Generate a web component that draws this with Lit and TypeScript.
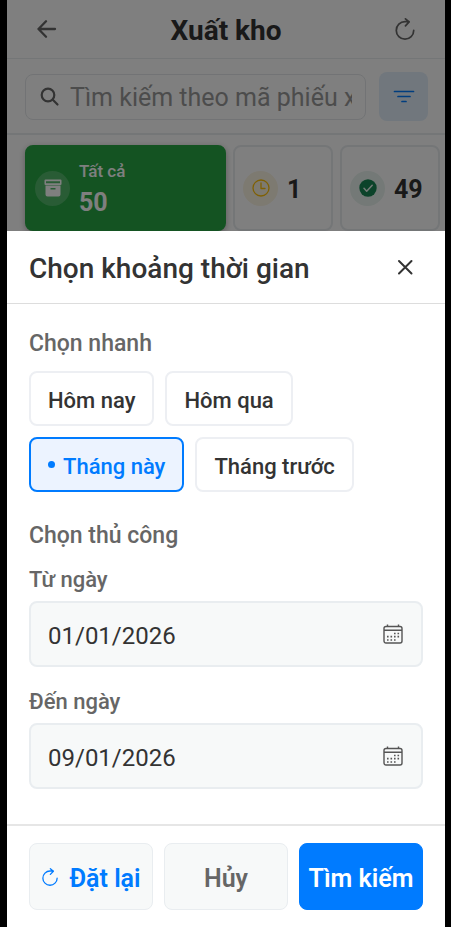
import { LitElement, html, css, svg, nothing } from "lit";
import { customElement, state } from "lit/decorators.js";
import { classMap } from "lit/directives/class-map.js";

const backIcon = svg`<svg width="20" height="20" viewBox="0 0 20 20" fill="none" stroke="currentColor" stroke-width="2.300" stroke-linecap="round" stroke-linejoin="round" aria-hidden="true"><path d="M18 10H1.500M9 2.300 1.500 10 9 17.700"/></svg>`;

const reloadIcon = (size: number, weight: number) => svg`<svg width=${size} height=${size} viewBox="0 0 24 24" fill="none" stroke="currentColor" stroke-width=${weight} stroke-linecap="round" stroke-linejoin="round" aria-hidden="true"><path d="M21.500 13.500A9.500 9.500 0 1 1 12 4h4.500M12.500 1 16.500 4.300 12.500 8.500"/></svg>`;

const searchIcon = svg`<svg width="20" height="20" viewBox="0 0 20 20" fill="none" stroke="currentColor" stroke-width="2.200" stroke-linecap="round" aria-hidden="true"><circle cx="8" cy="8" r="6.300"/><path d="m12.800 12.800 4.700 4.700"/></svg>`;

const filterIcon = svg`<svg width="22" height="14" viewBox="0 0 22 14" fill="none" stroke="currentColor" stroke-width="1.700" stroke-linecap="round" aria-hidden="true"><path d="M1.500 1.500h19M5 6.500h12M9 11.500h4"/></svg>`;

const archiveIcon = svg`<svg width="18" height="18" viewBox="0 0 18 18" fill="currentColor" aria-hidden="true"><path fill-rule="evenodd" d="M1.500.500h15a1 1 0 0 1 1 1V5a1 1 0 0 1-1 1h-15a1 1 0 0 1-1-1V1.500a1 1 0 0 1 1-1ZM2 2.200v2h14v-2ZM1.500 6.500h15v9a2 2 0 0 1-2 2h-11a2 2 0 0 1-2-2ZM6.500 9v1.400h5V9Z"/></svg>`;

const clockIcon = svg`<svg width="18" height="18" viewBox="0 0 18 18" fill="none" stroke="currentColor" stroke-width="1.300" stroke-linecap="round" stroke-linejoin="round" aria-hidden="true"><circle cx="9" cy="9" r="8"/><path d="M9 4v5.500h4"/></svg>`;

const checkIcon = svg`<svg width="18" height="18" viewBox="0 0 18 18" aria-hidden="true"><circle cx="9" cy="9" r="8.700" fill="currentColor"/><path d="m5 9.300 2.700 2.900 5.500-6" fill="none" stroke="#e8f5ee" stroke-width="1.500" stroke-linecap="round" stroke-linejoin="round"/></svg>`;

const closeIcon = svg`<svg width="16" height="16" viewBox="0 0 16 16" fill="none" stroke="currentColor" stroke-width="2" stroke-linecap="round" aria-hidden="true"><path d="m2 2 12.500 12.500M14.500 2 2 14.500"/></svg>`;

const calendarIcon = svg`<svg width="20" height="20" viewBox="0 0 20 20" fill="none" stroke="currentColor" aria-hidden="true"><rect x="1" y="2.500" width="18" height="16.500" rx="2" stroke-width="1.400"/><path d="M1 6.300h18M4.500.500v2M15.500.500v2" stroke-width="1.400"/><path d="M11 9.500h1.600M14.500 9.500h1.600M4 12.700h1.600M7.500 12.700h1.600M11 12.700h1.600M14.500 12.700h1.600M4 16h1.600M7.500 16h1.600M11 16h1.600" stroke-width="1.700"/></svg>`;

const QUICK_RANGES = ["Hôm nay", "Hôm qua", "Tháng này", "Tháng trước"];

@customElement("stock-screen")
class StockScreen extends LitElement {
  static styles = css`
    :host {
      display: block;
      min-width: 0;
      overflow: hidden;
      background: #fff;
      color: #333;
    }
    * {
      box-sizing: border-box;
    }
    button,
    input {
      font: inherit;
      color: inherit;
      padding: 0;
      border: 0;
      background: none;
    }
    svg {
      display: block;
      flex: none;
    }
    .bar {
      display: flex;
      align-items: center;
      justify-content: space-between;
      height: 59px;
      padding: 0 20px;
      border-bottom: 1px solid #e9ecef;
    }
    .bar h1 {
      margin: 0;
      padding-top: 3px;
      font-size: 28px;
      line-height: 32px;
      font-weight: 700;
    }
    .icon-button {
      display: grid;
      place-items: center;
      width: 40px;
      height: 40px;
      color: #666;
    }
    .search-row {
      display: flex;
      align-items: center;
      gap: 13px;
      padding: 13px 17px 12px 18px;
      border-bottom: 2px solid #e9ecef;
    }
    .search {
      flex: 1;
      min-width: 0;
      display: flex;
      align-items: center;
      gap: 10px;
      height: 46px;
      padding: 0 13px 0 14px;
      border: 1px solid #e4e7ea;
      border-radius: 8px;
      color: #666;
    }
    .search input {
      flex: 1;
      min-width: 0;
      height: 34px;
      padding-top: 2px;
      font-size: 25px;
      outline: none;
    }
    .search input::placeholder {
      color: #999;
      opacity: 1;
    }
    .filter {
      display: grid;
      place-items: center;
      width: 49px;
      height: 49px;
      border-radius: 8px;
      background: #e3effa;
      color: #007bff;
    }
    .cards {
      display: flex;
      gap: 7px;
      padding: 10px 18px;
    }
    .card {
      flex: none;
      display: flex;
      align-items: center;
      gap: 9px;
      width: 100px;
      height: 86px;
      padding: 0 8px;
      border: 2px solid #e9ecef;
      border-radius: 8px;
      text-align: left;
      font-size: 25px;
      line-height: 30px;
      font-weight: 700;
    }
    .card.active {
      width: 201px;
      border-color: #28a745;
      background: #28a745;
      color: #fff;
      box-shadow: 0 2px 6px rgba(0, 0, 0, 0.3);
    }
    .badge {
      flex: none;
      display: grid;
      place-items: center;
      width: 35px;
      height: 35px;
      border-radius: 50%;
    }
    .badge.all {
      background: rgba(255, 255, 255, 0.2);
    }
    .badge.pending {
      background: #fbf4e2;
      color: #ffc107;
    }
    .badge.done {
      background: #e8f3ee;
      color: #198754;
    }
    .count {
      display: block;
      padding-top: 4px;
    }
    .caption {
      display: block;
      font-size: 17px;
      line-height: 26px;
      font-weight: 500;
    }
  `;

  render() {
    return html`
      <header class="bar">
        <button class="icon-button" aria-label="Quay lại">${backIcon}</button>
        <h1>Xuất kho</h1>
        <button class="icon-button" aria-label="Tải lại">${reloadIcon(22, 1.9)}</button>
      </header>
      <div class="search-row">
        <label class="search">
          ${searchIcon}
          <input type="text" placeholder="Tìm kiếm theo mã phiếu xuất" aria-label="Tìm kiếm" />
        </label>
        <button class="filter" aria-label="Bộ lọc">${filterIcon}</button>
      </div>
      <div class="cards">
        <button class="card active">
          <span class="badge all">${archiveIcon}</span>
          <span><span class="caption">Tất cả</span><span class="count">50</span></span>
        </button>
        <button class="card" aria-label="Đang chờ">
          <span class="badge pending">${clockIcon}</span><span class="count">1</span>
        </button>
        <button class="card" aria-label="Hoàn thành">
          <span class="badge done">${checkIcon}</span><span class="count">49</span>
        </button>
      </div>
    `;
  }
}

@customElement("date-range-sheet")
class DateRangeSheet extends LitElement {
  @state() private selected = "Tháng này";

  static styles = css`
    :host {
      display: block;
      background: #fff;
      color: #333;
    }
    * {
      box-sizing: border-box;
    }
    button,
    input {
      font: inherit;
      color: inherit;
    }
    svg {
      display: block;
      flex: none;
    }
    .head {
      display: flex;
      align-items: center;
      justify-content: space-between;
      height: 73px;
      padding: 0 20px 0 22px;
      border-bottom: 1px solid #ddd;
    }
    h2,
    h3 {
      margin: 0;
      font-weight: 500;
    }
    h2 {
      padding-top: 3px;
      font-size: 28px;
      line-height: 32px;
    }
    h3 {
      font-size: 23px;
      line-height: 28px;
      color: #666;
    }
    .close {
      display: grid;
      place-items: center;
      width: 40px;
      height: 40px;
      padding: 0;
      border: 0;
      background: none;
    }
    .body {
      padding: 26px 22px 35px;
    }
    .chips {
      display: flex;
      flex-wrap: wrap;
      gap: 11px;
      margin: 13px 0 30px;
    }
    .chip {
      display: flex;
      align-items: center;
      gap: 8px;
      height: 55px;
      padding: 4px 17px 0;
      border: 2px solid #edeff3;
      border-radius: 8px;
      background: #fff;
      font-size: 22px;
      line-height: 28px;
      font-weight: 500;
    }
    .chip.on {
      border-color: #007bff;
      background: #ecf3ff;
      color: #007bff;
    }
    .dot {
      width: 7px;
      height: 7px;
      margin-bottom: 4px;
      border-radius: 50%;
      background: currentColor;
    }
    .field {
      margin-top: 22px;
    }
    h3 + .field {
      margin-top: 17px;
    }
    .field label {
      display: block;
      margin-bottom: 8px;
      font-size: 22px;
      line-height: 26px;
      font-weight: 500;
      color: #666;
    }
    .control {
      display: flex;
      align-items: center;
      height: 66px;
      padding: 0 18px 0 17px;
      border: 2px solid #e9edf0;
      border-radius: 8px;
      background: #f7f9f9;
      color: #555;
    }
    .control input {
      flex: 1;
      min-width: 0;
      padding: 3px 0 0;
      border: 0;
      outline: none;
      background: none;
      font-size: 24px;
      line-height: 28px;
      color: #333;
    }
    .foot {
      display: flex;
      gap: 11px;
      padding: 17px 22px;
      border-top: 2px solid #e6e6e6;
    }
    .action {
      flex: 1 1 0;
      min-width: 0;
      display: flex;
      align-items: center;
      justify-content: center;
      gap: 10px;
      height: 67px;
      padding: 4px 0 0;
      border: 1px solid #e9edf0;
      border-radius: 8px;
      background: #f7f9f9;
      font-size: 25px;
      line-height: 30px;
      font-weight: 600;
      white-space: nowrap;
      color: #666;
    }
    .action svg {
      margin-bottom: 4px;
    }
    .action.reset {
      color: #007bff;
    }
    .action.submit {
      border-color: #007bff;
      background: #007bff;
      color: #fff;
    }
  `;

  private field(id: string, label: string, value: string) {
    return html`
      <div class="field">
        <label for=${id}>${label}</label>
        <div class="control">
          <input id=${id} type="text" inputmode="numeric" .value=${value} />
          ${calendarIcon}
        </div>
      </div>
    `;
  }

  render() {
    return html`
      <header class="head">
        <h2>Chọn khoảng thời gian</h2>
        <button class="close" aria-label="Đóng">${closeIcon}</button>
      </header>
      <div class="body">
        <h3>Chọn nhanh</h3>
        <div class="chips">
          ${QUICK_RANGES.map((name) => {
            const on = name === this.selected;
            return html`<button
              class=${classMap({ chip: true, on })}
              aria-pressed=${on ? "true" : "false"}
              @click=${() => (this.selected = name)}
            >${on ? html`<span class="dot"></span>` : nothing}${name}</button>`;
          })}
        </div>
        <h3>Chọn thủ công</h3>
        ${this.field("from", "Từ ngày", "01/01/2026")}
        ${this.field("to", "Đến ngày", "09/01/2026")}
      </div>
      <footer class="foot">
        <button class="action reset">${reloadIcon(18, 1.7)}Đặt lại</button>
        <button class="action">Hủy</button>
        <button class="action submit">Tìm kiếm</button>
      </footer>
    `;
  }
}

@customElement("app-root")
class AppRoot extends LitElement {
  static styles = css`
    :host {
      display: block;
      box-sizing: border-box;
      min-height: 100vh;
      padding: 0 6px 0 7px;
      background: #000;
      font-family: Roboto, "Noto Sans", sans-serif;
    }
    .stack {
      display: grid;
      grid-template-columns: minmax(0, 1fr);
      min-height: 100vh;
    }
    .page,
    .overlay {
      grid-area: 1 / 1;
    }
    .overlay {
      z-index: 1;
      display: flex;
      flex-direction: column;
      justify-content: flex-end;
      background: rgba(0, 0, 0, 0.5);
    }
  `;

  render() {
    return html`
      <div class="stack">
        <stock-screen class="page"></stock-screen>
        <div class="overlay" role="dialog" aria-modal="true" aria-label="Chọn khoảng thời gian">
          <date-range-sheet></date-range-sheet>
        </div>
      </div>
    `;
  }
}
